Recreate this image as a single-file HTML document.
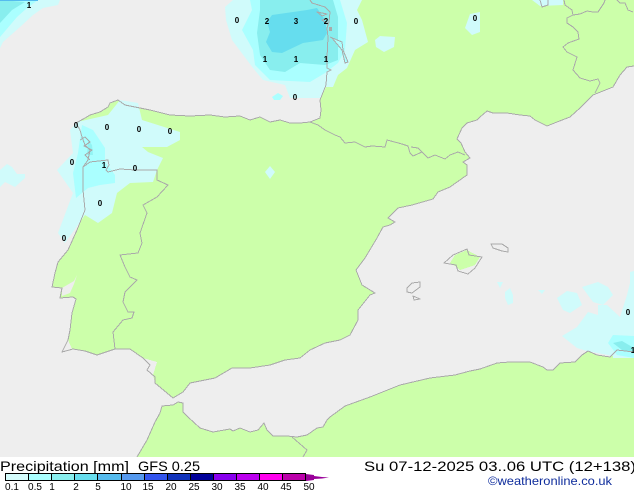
<!DOCTYPE html>
<html><head><meta charset="utf-8"><style>
html,body{margin:0;padding:0;background:#fff;width:634px;height:490px;overflow:hidden}
svg{display:block}
text{font-family:"Liberation Sans",sans-serif}
.n{font-family:"Liberation Sans",sans-serif;font-size:8px;font-weight:bold;text-anchor:middle;fill:#000}
.c{font-size:10px;text-anchor:middle;fill:#000}
.l{fill:none;stroke:#aaaaaa;stroke-width:1;stroke-linejoin:round;shape-rendering:crispEdges}
</style></head><body>
<svg width="634" height="490" viewBox="0 0 634 490" xmlns="http://www.w3.org/2000/svg">
<rect width="634" height="457" fill="#eeeeee"/>
<!-- land -->
<g fill="#ccffaa" shape-rendering="crispEdges">
<path d="M330 0L345 63L330 70L327 85L320 100L321 110L320 118L310 122L300 123L290 123L280 120L270 122L260 117L250 120L240 116L225 117L210 115L190 116L170 115L150 110L140 108L125 105L118 100L110 103L108 107L100 112L90 115L85 118L76 123L80 130L82 137L85 145L90 150L88 160L83 167L83 190L85 210L77 230L68 250L58 262L55 273L52 287L62 288L60 298L73 297L76 299L72 313L70 330L68 340L72 349L85 351L97 355L115 349L130 349L143 358L157 362L153 375L155 383L167 393L173 398L183 392L190 383L205 380L215 378L232 368L250 368L270 365L285 360L300 358L310 350L325 343L340 340L350 335L358 320L358 310L370 295L375 293L362 285L356 270L365 258L377 238L383 227L390 225L395 222L388 218L398 208L412 205L433 199L438 192L450 187L467 175L467 165L463 162L470 158L465 152L461 143L457 139L462 128L467 123L477 120L480 117L487 111L493 113L507 113L520 115L530 116L535 120L547 126L557 122L570 117L580 108L593 95L613 87L620 75L627 67L634 66L634 0Z"/>
<path d="M137 457L147 440L155 422L160 413L162 406L173 405L178 402L183 403L183 412L188 417L200 428L213 432L230 429L233 431L240 428L250 432L258 430L264 423L267 430L273 436L287 436L297 437L307 435L317 428L323 427L327 420L330 417L345 406L370 397L400 385L430 378L455 375L470 371L480 369L497 363L510 362L530 362L543 367L547 370L553 370L560 363L575 362L582 355L588 351L597 355L610 357L617 350L634 352L634 457Z"/>
<path d="M450 263L455 255L467 250L480 257L475 265L460 270L455 266Z"/>
</g>
<path d="M62 288L74 281L77 275L74 284L70 293L62 296Z" fill="#eeeeee"/>
<!-- rain palest -->
<g fill="#d0fbfb">
<path d="M233 0L225 7L226 20L232 40L253 68L263 80L285 85L290 98L320 98L325 87L333 87L338 75L347 68L355 50L368 42L362 20L357 10L362 0Z"/>
<path d="M375 40L380 36L395 37L394 47L384 52L376 47Z"/>
<path d="M465 28L470 14L480 12L480 32L472 35Z"/>
<path d="M0 0L60 0L58 5L43 8L33 15L20 27L3 42L0 48Z"/>
<path d="M0 170L7 164L12 167L17 174L25 174L25 178L15 187L5 182L0 187Z"/>
<path d="M265 172L270 166L275 172L270 179Z"/>
<path d="M70 130L77 122L108 115L120 100L138 103L142 120L180 132L180 140L167 147L142 147L148 152L163 158L157 170L153 182L130 183L117 193L112 213L98 223L85 215L65 243L58 233L73 193L57 170L73 153Z"/>
<path d="M532 0L563 0L563 5L540 6Z"/>
<path d="M497 282L503 282L500 288Z"/>
<path d="M505 292L510 288L513 295L513 303L508 305L505 298Z"/>
<path d="M538 290L545 290L542 294Z"/>
<path d="M557 298L567 291L577 293L582 305L570 313L563 310Z"/>
<path d="M582 287L598 282L608 287L613 295L603 305L593 302Z"/>
<path d="M562 336L577 327L588 312L598 315L598 305L607 305L620 317L627 295L630 283L630 272L634 271L634 358L613 358L613 356L587 351L577 348Z"/>
</g>
<!-- level 2 -->
<g fill="#aaffff">
<path d="M250 0L252 10L242 30L253 50L255 65L270 80L310 82L325 73L338 63L345 50L347 23L340 0Z"/>
<path d="M272 97L278 93L283 96L280 100L274 100Z"/>
<path d="M0 0L38 0L27 8L17 17L0 37Z"/>
<path d="M82 125L93 130L105 148L105 162L115 175L115 183L100 185L88 188L76 198L73 173L78 153Z"/>
<path d="M608 343L613 335L634 336L634 358L617 355Z"/>
</g>
<!-- level 3 -->
<g fill="#88eeee">
<path d="M260 0L260 10L257 33L260 55L270 70L285 72L300 63L325 65L338 60L338 17L333 0Z"/>
<path d="M0 0L25 2L12 10L0 23Z"/>
<path d="M613 343L622 341L634 348L634 352L622 350Z"/>
<path d="M88 140L92 145L93 155L87 155Z" opacity=".7"/>
</g>
<path fill="#66ddee" d="M272 15L307 10L317 8L325 20L327 33L323 40L303 43L282 53L272 52L266 42L270 32L267 22Z"/>
<rect x="0" y="0" width="38" height="1" fill="#55bbee"/>
<!-- coast and borders -->
<path d="M330 37L342 42L343 50L348 62L345 63L342 50L332 38Z" fill="#aaffff"/>
<rect x="329" y="27" width="3" height="4" fill="#aaaaaa"/>
<g>
<path class="l" d="M310 0L312 3L325 7L330 12L329 22L327 28L328 37L327 58L327 68L331 70L327 72L326 85L320 100L321 110L320 118L310 122L300 123L290 123L280 120L270 122L260 117L250 120L240 116L225 117L210 115L190 116L170 115L150 110L140 108L125 105L118 100L110 103L108 107L100 112L90 115L85 118L76 123L80 130L82 137L85 145L90 150L88 160L83 167L83 190L85 210L77 230L68 250L58 262L55 273L52 287L62 288L60 298L73 297L76 299L72 313L70 330L68 340L62 352L73 349L85 351L97 355L115 349L130 349L143 358L150 365L147 370L155 377L155 383L167 393L173 398L183 392L190 383L205 380L215 378L232 368L250 368L270 365L285 360L300 358L310 350L325 343L340 340L350 335L358 320L358 310L370 295L375 293L362 285L356 270L365 258L377 238L383 227L390 225L395 222L388 218L398 208L412 205L433 199L438 192L450 187L467 175L467 165L463 162L470 158L465 152L461 143L457 139L462 128L467 123L477 120L480 117L487 111L493 113L507 113L520 115L530 116L535 120L547 126L557 122L570 117L580 108L593 95L613 87L620 75L627 67L634 66"/>
<path class="l" d="M317 12L327 14L322 16ZM322 20L327 19L327 24ZM330 37L342 42L343 50L348 62L345 63L342 50L332 38"/>
<path class="l" d="M137 457L147 440L155 422L160 413L162 406L173 405L178 402L183 403L183 412L188 417L200 428L213 432L230 429L233 431L240 428L250 432L258 430L264 423L267 430L273 436L287 436L297 437L307 435L317 428L323 427L327 420L330 417L345 406L370 397L400 385L430 378L455 375L470 371L480 369L497 363L510 362L530 362L543 367L547 370L553 370L560 363L575 362L582 355L588 351L597 355L610 357L617 350L634 352"/>
<path class="l" d="M292 437L307 450L303 457"/>
<path class="l" d="M310 122L318 125L325 130L335 135L340 137L345 143L355 142L365 147L372 146L385 147L387 140L402 144L408 146L410 153L413 156L422 152L418 148L411 147M422 152L428 158L435 155L445 159L450 155L458 152L465 155"/>
<path class="l" d="M83 167L90 162L108 160L109 165L106 170L108 172L120 169L135 170L157 170L157 180L168 185L157 197L143 205L147 213L140 233L142 243L138 253L120 255L125 267L130 277L137 280L125 292L123 302L128 312L134 312L132 318L123 320L113 332L115 349"/>
<path class="l" d="M564 0L565 5L572 10L573 15L580 14L587 11L593 12L598 12L604 3L605 0M573 15L567 18L567 23L573 27L578 32L579 39L568 43L563 47L567 52L577 57L573 70L580 78L590 81L598 79L600 83L595 93M617 0L620 3L625 3L628 10L633 12M540 0L542 7L548 5L548 0"/>
<path class="l" d="M444 263L453 255L467 249L469 255L482 257L475 268L468 274L458 271L456 265Z"/>
<path class="l" d="M491 244L502 244L508 248L508 252L502 251L493 248Z"/>
<path class="l" d="M407 288L412 283L420 282L420 287L412 293L407 292Z"/>
<path class="l" d="M413 296L420 299L414 300Z"/>
<path class="l" d="M80 140L85 137L90 142L84 146L92 150L85 155L90 160"/>
</g>
<!-- labels -->
<g>
<text class="n" x="237" y="23">0</text><text class="n" x="267" y="24">2</text><text class="n" x="296" y="24">3</text><text class="n" x="326" y="24">2</text><text class="n" x="356" y="24">0</text>
<text class="n" x="265" y="62">1</text><text class="n" x="296" y="62">1</text><text class="n" x="326" y="62">1</text><text class="n" x="295" y="100">0</text>
<text class="n" x="76" y="128">0</text><text class="n" x="107" y="130">0</text><text class="n" x="139" y="132">0</text><text class="n" x="170" y="134">0</text>
<text class="n" x="72" y="165">0</text><text class="n" x="104" y="168">1</text><text class="n" x="135" y="171">0</text><text class="n" x="100" y="206">0</text><text class="n" x="64" y="241">0</text>
<text class="n" x="475" y="21">0</text><text class="n" x="628" y="315">0</text><text class="n" x="633" y="353">1</text><text class="n" x="29" y="8">1</text>
</g>
<!-- footer -->
<rect y="457" width="634" height="33" fill="#fff"/>
<text x="0" y="471" font-size="14" textLength="129" lengthAdjust="spacingAndGlyphs" fill="#000">Precipitation [mm]</text>
<text x="138" y="471" font-size="14" textLength="62" lengthAdjust="spacingAndGlyphs" fill="#000">GFS 0.25</text>
<text x="364" y="471" font-size="14" textLength="272" lengthAdjust="spacingAndGlyphs" fill="#000">Su 07-12-2025 03..06 UTC (12+138)</text>
<text x="488" y="485" font-size="12" textLength="124" lengthAdjust="spacingAndGlyphs" fill="#0f2d9c">©weatheronline.co.uk</text>
<g shape-rendering="crispEdges" stroke="#000" stroke-width="1">
<rect x="5.5" y="473.5" width="23" height="7" fill="#d5fdfd"/><rect x="28.5" y="473.5" width="23" height="7" fill="#aaffff"/><rect x="51.5" y="473.5" width="23" height="7" fill="#88eeee"/><rect x="74.5" y="473.5" width="23" height="7" fill="#66ddee"/><rect x="97.5" y="473.5" width="24" height="7" fill="#55bbee"/><rect x="121.5" y="473.5" width="23" height="7" fill="#5599ee"/><rect x="144.5" y="473.5" width="23" height="7" fill="#3355ee"/><rect x="167.5" y="473.5" width="23" height="7" fill="#1133bb"/><rect x="190.5" y="473.5" width="23" height="7" fill="#000099"/><rect x="213.5" y="473.5" width="23" height="7" fill="#8800ee"/><rect x="236.5" y="473.5" width="23" height="7" fill="#bb00ee"/><rect x="259.5" y="473.5" width="23" height="7" fill="#ff00ee"/><rect x="282.5" y="473.5" width="23" height="7" fill="#bb00aa"/>
</g>
<path d="M306 474L314 475L314 476L322 477L329 477.5L322 478.5L314 479L314 480L306 481Z" fill="#990099"/>
<g>
<text class="c" x="12" y="490">0.1</text><text class="c" x="35" y="490">0.5</text><text class="c" x="52" y="490">1</text><text class="c" x="76" y="490">2</text><text class="c" x="98" y="490">5</text><text class="c" x="126" y="490">10</text><text class="c" x="148" y="490">15</text><text class="c" x="171" y="490">20</text><text class="c" x="194" y="490">25</text><text class="c" x="217" y="490">30</text><text class="c" x="240" y="490">35</text><text class="c" x="263" y="490">40</text><text class="c" x="286" y="490">45</text><text class="c" x="309" y="490">50</text>
</g>
</svg>
</body></html>
